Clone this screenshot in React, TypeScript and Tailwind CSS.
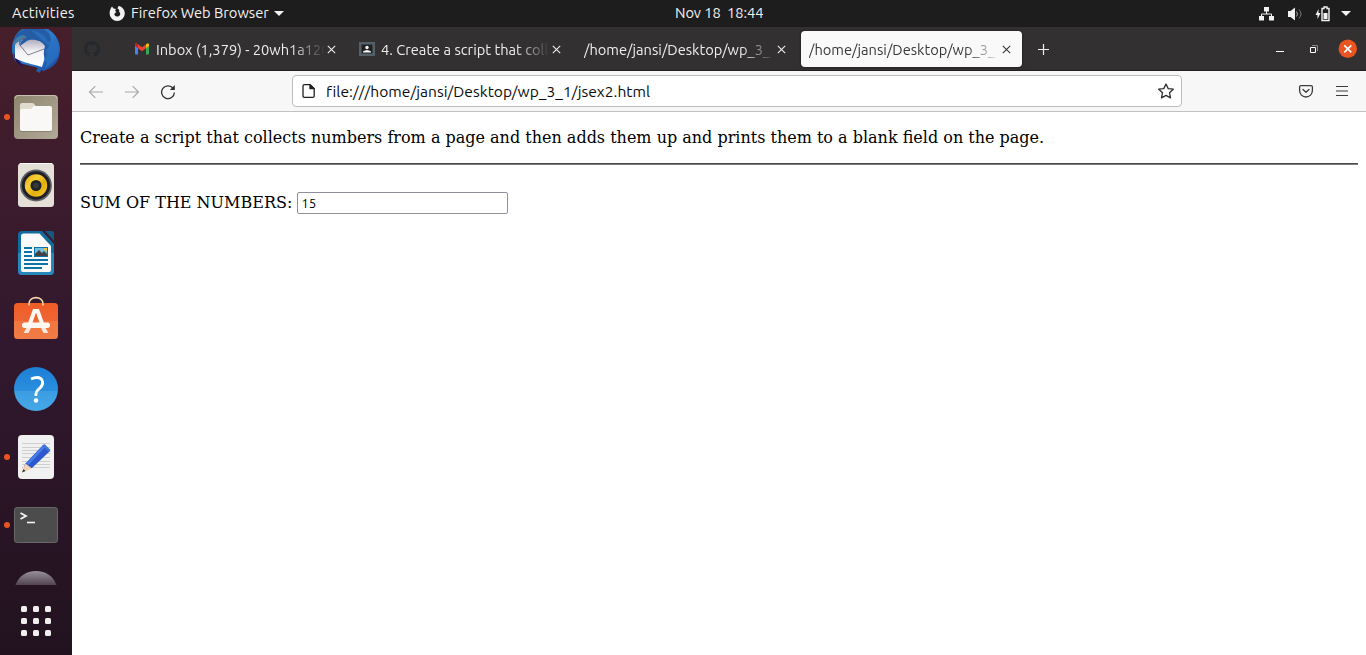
import type { ReactNode } from 'react';

const UI = "font-['Ubuntu','Noto_Sans',sans-serif]";

function DockCell({ children, running = false, label }: { children: ReactNode; running?: boolean; label: string }) {
  return (
    <svg className="block h-[68px] w-[72px] shrink-0" viewBox="0 0 72 68" role="img" aria-label={label}>
      {running && <circle cx="7" cy="34" r="3" fill="#e95420" />}
      {children}
    </svg>
  );
}

function Thunderbird() {
  return (
    <svg className="block h-14 w-[72px] shrink-0" viewBox="0 0 72 56" role="img" aria-label="Thunderbird">
      <defs>
        <linearGradient id="tb" x1="0" y1="0" x2="1" y2="1">
          <stop offset="0" stopColor="#2767b0" />
          <stop offset=".5" stopColor="#2c7cca" />
          <stop offset="1" stopColor="#1b3f98" />
        </linearGradient>
        <linearGradient id="env" x1="0" y1="0" x2="0" y2="1">
          <stop offset="0" stopColor="#a9a6b8" />
          <stop offset=".45" stopColor="#f3f3f5" />
          <stop offset="1" stopColor="#fff" />
        </linearGradient>
      </defs>
      <path d="M22 2H48C55 6 60 14 60 22C60 33 54 40 48 42L44 44L41 43L40 46L36 44L38 41L31 39L16 35C11 27 11 18 14 12C16 7 18 4 22 2Z" fill="url(#tb)" />
      <path d="M13 26L16 35L24 41L21 36Z" fill="#23135d" />
      <path d="M15 18C18 12 30 10 40 13L46 20L45 30L42 40L35 38C26 36 18 33 15 31Z" fill="url(#env)" />
      <path d="M19 17L28 28L44 22" stroke="#77727c" strokeWidth=".9" fill="none" />
      <path d="M14 15C15 7 20 3 27 2H43C51 5 53 14 49 21L45 33C43 27 44 22 45 19C42 14 36 12 29 13C26 14 23 17 20 19C20 16 21 14 23 13C20 12 17 13 14 15Z" fill="#245da6" />
      <path d="M31 3C38 4 45 8 48 15L54 12L59 20L58 29L51 37L45 42L47 35L44 34L48 27L45 25L49 19" fill="#2b74c4" opacity=".7" />
      <path d="M13 18C15 11 18 9 23 8L27 10L22 13L19 18L19 14Z" fill="#427ca9" />
      <circle cx="23.500" cy="11.500" r="1" fill="#c23c4b" />
    </svg>
  );
}

function Dock() {
  return (
    <aside className="flex h-full w-[72px] shrink-0 flex-col overflow-hidden bg-linear-to-b from-[#471f2b] via-[#32182e] to-[#22121f]">
      <Thunderbird />
      <DockCell label="Files" running>
        <defs>
          <linearGradient id="files" x1="0" y1="0" x2="1" y2="1">
            <stop offset="0" stopColor="#8d856e" />
            <stop offset="1" stopColor="#b2aa98" />
          </linearGradient>
        </defs>
        <rect x="14" y="12" width="44" height="44" rx="4" fill="url(#files)" />
        <path d="M15 15.500Q15 12.500 18 12.500H54Q57 12.500 57 15.500" stroke="#c6c0b1" fill="none" />
        <path d="M20 45V22Q20 20 22 20H32Q34 20 35 22L36 24V32H20Z" fill="#e0dbcf" />
        <path d="M20 28Q20 26 22 26H31L34 23H50Q52 23 52 25V46Q52 48 50 48H22Q20 48 20 46Z" fill="#f9f8f6" />
        <path d="M21 48.500H51" stroke="#777060" opacity=".6" />
      </DockCell>
      <DockCell label="Rhythmbox">
        <defs>
          <linearGradient id="cone" x1="0" y1="0" x2="1" y2="1">
            <stop offset="0" stopColor="#dca30b" />
            <stop offset=".35" stopColor="#f6d237" />
            <stop offset=".6" stopColor="#e4ae0c" />
            <stop offset="1" stopColor="#f5cc2c" />
          </linearGradient>
        </defs>
        <rect x="18" y="12" width="36" height="44" rx="3.500" fill="#e4e0d7" />
        <path d="M20 12.500H52" stroke="#fff" />
        <circle cx="36" cy="34.500" r="15.900" fill="#5e6266" />
        <circle cx="36" cy="34.500" r="14.200" fill="#1f1f28" />
        <circle cx="36" cy="34.500" r="11.200" fill="url(#cone)" />
        <circle cx="36" cy="34.500" r="5.500" fill="#202426" />
        <circle cx="36" cy="34.500" r="2.800" fill="#343a3c" />
      </DockCell>
      <DockCell label="LibreOffice Writer">
        <path d="M22 12H42L54 25V52Q54 56 50 56H22Q18 56 18 52V16Q18 12 22 12Z" fill="#126b9e" />
        <path d="M18 34H54V52Q54 56 50 56H22Q18 56 18 52Z" fill="#2788bc" />
        <path d="M45 12H52Q54 12 54 14V22Z" fill="#15587f" />
        <path d="M23 14.500H39.500L51 27V51Q51 53 49 53H23Q21 53 21 51V17Q21 14.500 23 14.500Z" fill="#fafafa" />
        <path d="M24 29H32M24 33H32M24 37H32M24 41H48M24 45H48M24 49H42" stroke="#0c73a9" strokeWidth="2" />
        <rect x="34" y="28" width="14" height="10" fill="#0c73a9" />
        <rect x="35" y="29" width="12" height="8" fill="#73bfdf" />
        <path d="M35 37V35L39 31L42 34L44 32L47 35V37Z" fill="#424242" />
        <path d="M44 29H47V32Q44 32 44 29Z" fill="#f4c72d" />
      </DockCell>
      <DockCell label="Ubuntu Software">
        <defs>
          <linearGradient id="bag" x1="0" y1="0" x2="0" y2="1">
            <stop offset="0" stopColor="#f15b24" />
            <stop offset=".49" stopColor="#ed6635" />
            <stop offset=".5" stopColor="#f1753f" />
            <stop offset="1" stopColor="#f07c45" />
          </linearGradient>
        </defs>
        <rect x="14" y="16" width="44" height="36" rx="3.500" fill="url(#bag)" />
        <path d="M29 18.500V17C29 8.500 43 8.500 43 17V18.500" stroke="#f3d7a7" strokeWidth="1.600" fill="none" />
        <path d="M33 22H39L44 36H39.700L36 25.500L32.300 36H28Z" fill="#fff8f2" />
        <rect x="22" y="35.500" width="28" height="5.500" rx="2.700" fill="#fff8f2" />
        <path d="M26.500 41H31L28.500 46H23.500ZM41 41H45.500L48.500 46H43.500Z" fill="#fbe6da" />
      </DockCell>
      <DockCell label="Help">
        <defs>
          <linearGradient id="help" x1="0" y1="0" x2="0" y2="1">
            <stop offset="0" stopColor="#1c7fd6" />
            <stop offset=".54" stopColor="#2b8fde" />
            <stop offset=".55" stopColor="#3b9ce2" />
            <stop offset="1" stopColor="#47a8e8" />
          </linearGradient>
        </defs>
        <circle cx="36" cy="34" r="22" fill="url(#help)" />
        <path d="M31 24Q34 22.500 37 22.500C43 22.500 44.500 29 40 33C37.200 35.500 35.800 36.500 35.800 41" stroke="#fff" strokeWidth="2.800" fill="none" />
        <circle cx="36" cy="45.500" r="2.300" fill="#fff" />
      </DockCell>
      <DockCell label="Text Editor" running>
        <rect x="18" y="12" width="36" height="44" rx="4" fill="#f1f1f1" />
        <path d="M22 20.500H50M22 24.500H50M22 27.500H50M22 30.500H50M22 34.500H50M22 38.500H50M22 41.500H50M22 44.500H50" stroke="#cfcfcf" />
        <path d="M24 45L25 41L43 22L50 28L32 45Z" fill="#2c58cd" />
        <path d="M26.500 40L43 22.500L45 24.500L28.500 42Z" fill="#467be9" />
        <path d="M44.500 21L50.500 27L49 29L42.500 22.500Z" fill="#4074d7" />
        <path d="M22 49.500L25.500 40.500L32 45.500Z" fill="#f3d3b3" />
        <path d="M22 49.500L23.500 46L25.500 48Z" fill="#343434" />
      </DockCell>
      <DockCell label="Terminal" running>
        <rect x="14" y="16" width="44" height="36" rx="3.500" fill="#4b4c4b" />
        <rect x="14.500" y="16.500" width="43" height="35" rx="3" fill="none" stroke="#686867" />
        <path d="M20.500 22L26 25L20.500 28" stroke="#f4f4f4" strokeWidth="1.800" fill="none" />
        <path d="M27 31.500H35" stroke="#f4f4f4" strokeWidth="1.600" />
      </DockCell>
      <svg className="block h-[26px] w-[72px] shrink-0" viewBox="0 0 72 26" aria-label="Disk">
        <defs>
          <linearGradient id="disc" x1="0" y1="0" x2="0" y2="1">
            <stop offset="0" stopColor="#97909a" />
            <stop offset="1" stopColor="#524450" />
          </linearGradient>
        </defs>
        <path d="M15.500 26C19 17 26 12 36 12S53 17 56.500 26Z" fill="url(#disc)" />
      </svg>
      <div className="flex h-[70px] shrink-0 items-center justify-center pt-[2px]">
        <div className="grid grid-cols-3 gap-[6px]" aria-label="Show Applications">
          {Array.from({ length: 9 }, (_, i) => (
            <span key={i} className="h-[6px] w-[6px] rounded-[1.500px] bg-[#f0efee]" />
          ))}
        </div>
      </div>
    </aside>
  );
}

function TopBar() {
  return (
    <header className={`flex h-[27px] shrink-0 items-center bg-[#1d1d1d] text-[14.667px] leading-[25px] whitespace-pre text-[#f2f2f2] ${UI}`}>
      <div className="flex w-[584px] items-center">
        <span className="ml-3 w-[97px] shrink-0 pb-[2px] tracking-[0.250px]">Activities</span>
        <svg className="h-4 w-4 shrink-0" viewBox="0 0 16 16" aria-hidden="true">
          <path d="M3 .5L4.500 2.500L7 3L6 5L7.500 6L5.500 7.500C5 9.500 7 11 9 10.500C11.500 10 12 7 10 5.500C11 4 9.500 3 8.500 2.500L9.500 0C13 .5 15.800 3.500 15.800 7.500A7.600 7.600 0 0 1 .6 7.500C.6 4.500 1.500 2.500 3 .5Z" fill="#f2f2f2" />
        </svg>
        <span className="ml-[6px] w-[138px] shrink-0 pb-[2px]">Firefox Web Browser</span>
        <svg className="ml-[5px] h-[5px] w-[10px] shrink-0" viewBox="0 0 10 5" aria-hidden="true"><path d="M0 0H10L5 5Z" fill="#f2f2f2" /></svg>
      </div>
      <div className="ml-[91px] w-[110px] pb-[2px] tracking-[-0.080px]">Nov 18  18:44</div>
      <div className="ml-auto flex h-full items-center pr-[15px]">
        <svg className="h-4 w-[16px]" viewBox="0 0 16 16" aria-hidden="true">
          <path d="M6 1H11V5.500H6ZM1 10H6V14.500H1ZM11 10H16V14.500H11Z" fill="#f2f2f2" />
          <path d="M8.500 5V8M3.500 10V8H13.500V10" stroke="#f2f2f2" fill="none" />
        </svg>
        <svg className="ml-[13px] h-4 w-4" viewBox="0 0 16 16" aria-hidden="true">
          <path d="M1 5H3.500L8 1.500V14.500L3.500 11H1Z" fill="#f2f2f2" />
          <path d="M9.500 5.500Q11.500 8 9.500 10.500" stroke="#aaa" fill="none" />
          <path d="M12 3.500Q16 8 12 12.500" stroke="#777" fill="none" />
        </svg>
        <svg className="ml-3 h-4 w-4" viewBox="0 0 16 16" aria-hidden="true">
          <path d="M3.500 3V7H5.500L2.500 13V9H.5Z" fill="#f2f2f2" />
          <path d="M7 2.500H9V1H12V2.500H14V14.500H7Z" stroke="#f2f2f2" strokeWidth="1.400" fill="none" />
          <path d="M8.500 7H12.500V13H8.500Z" fill="#f2f2f2" />
        </svg>
        <svg className="ml-[10px] h-[5px] w-[10px]" viewBox="0 0 10 5" aria-hidden="true"><path d="M0 0H10L5 5Z" fill="#f2f2f2" /></svg>
      </div>
    </header>
  );
}

function TabClose() {
  return (
    <svg className="h-[9px] w-[9px] shrink-0" viewBox="0 0 9 9" aria-hidden="true">
      <path d="M.8 .8L8.200 8.200M8.200 .8L.8 8.200" stroke="currentColor" strokeWidth="1.100" />
    </svg>
  );
}

function Tab({ icon, title, active = false }: { icon?: ReactNode; title: string; active?: boolean }) {
  return (
    <div className={active ? 'ml-[4px] flex h-9 w-[221px] shrink-0 items-center rounded bg-[#f9f9f9] pr-[11px] pl-2 text-[#383838] shadow-[0_0_3px_rgba(0,0,0,0.5)]' : 'ml-[4px] flex h-9 w-[221px] shrink-0 items-center pr-[11px] pl-2 text-[#ededed]'}>
      {icon}
      <span className="min-w-0 flex-1 overflow-hidden pt-[2px] whitespace-nowrap mask-r-from-[calc(100%-34px)] mask-r-to-100%">{title}</span>
      <span className="ml-[2px] flex pt-px"><TabClose /></span>
    </div>
  );
}

function TabBar() {
  return (
    <div className={`flex h-[44px] shrink-0 items-center border-b border-[#211f20] bg-[#333031] text-[14.667px] leading-5 ${UI}`}>
      <svg className="ml-3 h-4 w-4 shrink-0" viewBox="0 0 16 16" role="img" aria-label="GitHub">
        <path fill="#24292e" d="M8 0C3.580 0 0 3.580 0 8c0 3.540 2.290 6.530 5.470 7.590.4.070.55-.17.55-.38v-1.490c-2.010.37-2.530-.49-2.690-.94-.09-.23-.48-.94-.82-1.130-.28-.15-.68-.52-.01-.53.63-.01 1.080.58 1.230.82.72 1.210 1.870.87 2.330.66.070-.52.28-.87.51-1.070-1.780-.2-3.640-.89-3.640-3.950 0-.87.31-1.590.82-2.150-.08-.2-.36-1.020.08-2.120 0 0 .67-.21 2.200.82a7.600 7.600 0 0 1 4 0c1.530-1.040 2.200-.82 2.200-.82.44 1.100.16 1.920.08 2.120.51.56.82 1.270.82 2.150 0 3.070-1.870 3.750-3.650 3.950.29.25.54.73.54 1.480v2.200c0 .21.15.46.55.38A8.010 8.010 0 0 0 16 8c0-4.420-3.580-8-8-8Z" />
      </svg>
      <div className="ml-[22px] flex items-center">
        <Tab
          title="Inbox (1,379) - 20wh1a120"
          icon={
            <svg className="mr-[6px] h-4 w-4 shrink-0" viewBox="0 0 16 16" role="img" aria-label="Gmail">
              <path d="M1 4L4 6V13.500H2Q1 13.500 1 12.500Z" fill="#4285f4" />
              <path d="M12 6L15 4V12.500Q15 13.500 14 13.500H12Z" fill="#34a853" />
              <path d="M1 4Q1 1.500 3.200 2.700L8 6.300L12 3.400V7.200L8 10.200L4 7.200V5Z" fill="#ea4335" />
              <path d="M1 4Q1 1.500 3.200 2.700L4 3.300V7.200L1 5Z" fill="#c5221f" />
              <path d="M15 4Q15 1.500 12.800 2.700L12 3.300V7.200L15 5Z" fill="#fbbc04" />
            </svg>
          }
        />
        <Tab
          title="4. Create a script that coll"
          icon={
            <svg className="mr-[6px] h-4 w-4 shrink-0" viewBox="0 0 16 16" role="img" aria-label="Classroom">
              <path d="M0 1H16V15H0Z" fill="#566069" />
              <path d="M2.500 3.500H13.500V12.500H2.500Z" fill="#202124" />
              <circle cx="8" cy="6.500" r="1.700" fill="#f5f5f5" />
              <path d="M4 11.500V10.500Q8 7.500 12 10.500V11.500Z" fill="#f5f5f5" />
            </svg>
          }
        />
        <Tab title="/home/jansi/Desktop/wp_3_" />
        <Tab title="/home/jansi/Desktop/wp_3_" active />
      </div>
      <svg className="mt-px ml-4 h-[11px] w-[11px] shrink-0" viewBox="0 0 11 11" aria-label="New tab"><path d="M0 5.500H11M5.500 0V11" stroke="#f0f0f0" strokeWidth="1.200" /></svg>
      <div className="ml-auto flex items-center pr-[9px]">
        <svg className="h-4 w-4" viewBox="0 0 16 16" aria-label="Minimize"><path d="M4 10.500H12" stroke="#fff" /></svg>
        <svg className="ml-[18px] h-4 w-4" viewBox="0 0 16 16" aria-label="Restore"><path d="M4.500 6.500H9.500V11.500H4.500Z" stroke="#fff" fill="none" /><path d="M6 4.500H11.500V10" stroke="#8a8889" fill="none" /></svg>
        <svg className="ml-4 h-[19px] w-[19px]" viewBox="0 0 19 19" aria-label="Close"><circle cx="9.800" cy="9.800" r="9.200" fill="#e95420" /><path d="M6.300 6.300L13.300 13.300M13.300 6.300L6.300 13.300" stroke="#fff" strokeWidth="1.700" /></svg>
      </div>
    </div>
  );
}

function AddressBar() {
  return (
    <div className="flex h-[41px] shrink-0 items-center border-b border-[#c2c2c2] bg-[#f7f7f7]">
      <svg className="mt-px ml-4 h-4 w-4 shrink-0" viewBox="0 0 16 16" fill="none" stroke="#aaa" strokeWidth="1.200" aria-label="Back"><path d="M15 8H1.800M7.300 2.200L1.500 8L7.300 13.800" /></svg>
      <svg className="mt-px ml-5 h-4 w-4 shrink-0" viewBox="0 0 16 16" fill="none" stroke="#aaa" strokeWidth="1.200" aria-label="Forward"><path d="M1 8H14.200M8.700 2.200L14.500 8L8.700 13.800" /></svg>
      <svg className="mt-px ml-5 h-4 w-4 shrink-0" viewBox="0 0 16 16" fill="none" stroke="#303030" strokeWidth="1.300" aria-label="Reload">
        <path d="M13.200 4.500A6.400 6.400 0 1 0 14.400 8.500" /><path d="M14.800 1V6H9.800Z" fill="#303030" stroke="none" />
      </svg>
      <div className={`ml-[116px] flex h-8 w-[890px] shrink-0 items-center rounded-[4px] border border-[#bdbdbd] bg-white pr-[7px] pl-[8px] text-[15.600px] leading-5 text-[#0c0c0d] ${UI}`}>
        <svg className="h-4 w-4" viewBox="0 0 16 16" fill="none" stroke="#202020" strokeWidth="1.300" strokeLinejoin="round" aria-hidden="true">
          <path d="M3.500 1.600H9L13.200 5.700V13Q13.200 14.300 12 14.300H3.500Q2 14.300 2 13V3Q2 1.600 3.500 1.600Z" /><path d="M9 1.600V5.700H13.200Z" fill="#202020" />
        </svg>
        <span className="ml-[9px] tracking-[0.020px]">file:///home/jansi/Desktop/wp_3_1/jsex2.html</span>
        <svg className="ml-auto h-4 w-4" viewBox="0 0 16 16" fill="none" stroke="#303030" strokeWidth="1.300" strokeLinejoin="round" aria-label="Bookmark">
          <path d="M8 1L10.200 5.600L15.300 6.200L11.500 9.700L12.500 14.900L8 12.400L3.500 14.900L4.500 9.700L.7 6.200L5.800 5.600Z" />
        </svg>
      </div>
      <svg className="ml-auto h-4 w-4" viewBox="0 0 16 16" fill="none" stroke="#3c3c3c" strokeWidth="1.300" strokeLinecap="round" strokeLinejoin="round" aria-label="Pocket">
        <path d="M3 2.700H13Q14.400 2.700 14.400 4.100V7.600A6.400 6.400 0 0 1 1.600 7.600V4.100Q1.600 2.700 3 2.700Z" /><path d="M5 6.500L8 9.300L11 6.500" />
      </svg>
      <svg className="mr-4 ml-5 h-4 w-4" viewBox="0 0 16 16" stroke="#3c3c3c" strokeWidth="1.200" aria-label="Menu"><path d="M2 3.500H14M2 8H14M2 12.500H14" /></svg>
    </div>
  );
}

export default function App() {
  return (
    <div className="flex h-[655px] w-[1366px] flex-col overflow-hidden">
      <TopBar />
      <div className="flex min-h-0 flex-1">
        <Dock />
        <div className="flex min-w-0 flex-1 flex-col bg-white">
          <TabBar />
          <AddressBar />
          <main className="flex-1 px-2 pt-4 font-['DejaVu_Serif',serif] text-base leading-[19px] text-black">
            <p>Create a script that collects numbers from a page and then adds them up and prints them to a blank field on the page.</p>
            <hr className="mt-4 h-[2px] border-0 border-t border-b border-t-[#4b4b4b] border-b-[#7a7a7a]" />
            <div className="mt-[27px] flex h-[22px] items-start">
              <label htmlFor="sum" className="pt-px whitespace-nowrap">SUM OF THE NUMBERS:</label>
              <input
                id="sum"
                defaultValue="15"
                className="ml-[5px] h-[22px] w-[211px] rounded-[2px] border border-[#8f8f9d] bg-white px-[3px] font-['Ubuntu','Noto_Sans',sans-serif] text-[13.333px] text-black outline-none"
              />
            </div>
          </main>
        </div>
      </div>
    </div>
  );
}
